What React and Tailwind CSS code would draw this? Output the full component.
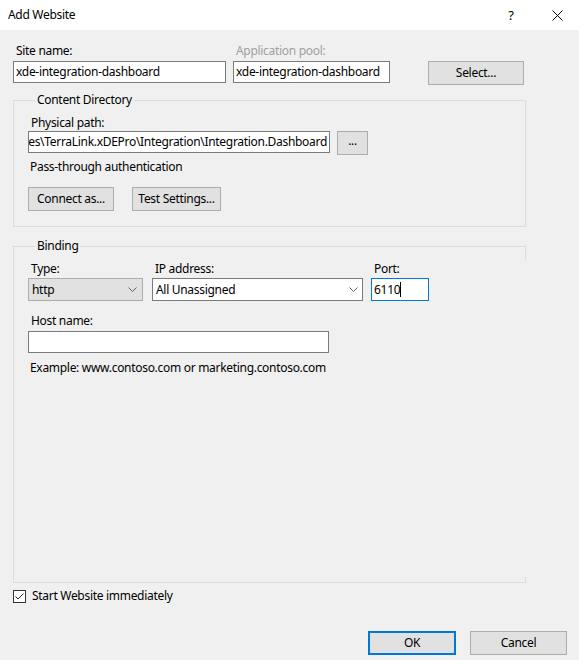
import React from "react";

const FONT = { fontFamily: '"Noto Sans", "Open Sans", Arial, sans-serif' };

function Chevron() {
  return (
    <svg width="9" height="5" viewBox="0 0 9 5" className="shrink-0">
      <polyline points="0.5,0.5 4.5,4.5 8.5,0.5" fill="none" stroke="#606060" strokeWidth="1" />
    </svg>
  );
}

function Button({ children, className = "" }) {
  return (
    <div
      className={`flex h-[24px] items-center justify-center border border-[#adadad] bg-[#e1e1e1] text-black ${className}`}
    >
      {children}
    </div>
  );
}

function TextBox({ children, className = "" }) {
  return (
    <div
      className={`flex h-[22px] items-center overflow-hidden whitespace-nowrap border border-[#7a7a7a] bg-white pl-[2px] ${className}`}
    >
      {children}
    </div>
  );
}

function Label({ children, className = "" }) {
  return <div className={`h-4 pl-[3px] leading-4 ${className}`}>{children}</div>;
}

export default function App() {
  return (
    <div
      style={FONT}
      className="flex h-[660px] w-[579px] flex-col overflow-hidden bg-[#f0f0f0] text-[12px] leading-4 tracking-[-0.3px] text-black"
    >
      {/* title bar */}
      <div className="flex h-[30px] items-center bg-white pl-[8px]">
        <span className="flex-1">Add Website</span>
        <span className="w-[10px] text-center text-[13px]">?</span>
        <span className="ml-[35px] mr-[16px] flex h-[12px] w-[12px] items-center justify-center">
          <svg width="11" height="11" viewBox="0 0 11 11">
            <path d="M0.5 0.5 L10.5 10.5 M10.5 0.5 L0.5 10.5" stroke="#000" strokeWidth="1" />
          </svg>
        </span>
      </div>

      <div className="px-[13px]">
        {/* site name / app pool */}
        <div className="mt-[13px] flex items-start">
          <div className="w-[213px]">
            <Label>Site name:</Label>
            <TextBox className="mt-[2px]">xde-integration-dashboard</TextBox>
          </div>
          <div className="ml-[7px] w-[157px]">
            <Label className="text-[#a0a0a0]">Application pool:</Label>
            <TextBox className="mt-[2px] bg-[#f0f0f0]">xde-integration-dashboard</TextBox>
          </div>
          <Button className="ml-[38px] mt-[18px] w-[96px]">Select...</Button>
        </div>

        {/* content directory */}
        <fieldset className="mt-[7px] w-[513px] border border-[#dcdcdc] px-[14px] pb-[15px]">
          <legend className="ml-[7px] px-[2px] leading-4">Content Directory</legend>
          <Label className="mt-[7px] pl-[2px]">Physical path:</Label>
          <div className="flex items-start">
            <TextBox className="w-[302px] justify-end pr-[2px]">
              C:\Program Files\TerraLink.xDEPro\Integration\Integration.Dashboard
            </TextBox>
            <Button className="ml-[7px] w-[31px] pb-[4px]">...</Button>
          </div>
          <div className="mt-[4px] pl-[2px]">Pass-through authentication</div>
          <div className="mt-[12px] flex gap-[18px]">
            <Button className="w-[86px]">Connect as...</Button>
            <Button className="w-[89px]">Test Settings...</Button>
          </div>
        </fieldset>

        {/* binding */}
        <fieldset className="relative mt-[11px] h-[345px] w-[513px] border border-[#dcdcdc] border-r-transparent px-[14px]">
          <legend className="ml-[7px] px-[2px] leading-4">Binding</legend>
          <span className="absolute -right-px top-[-9px] h-[15px] w-px bg-[#dcdcdc]" />
          <span className="absolute -right-px bottom-[-1px] h-[6px] w-px bg-[#dcdcdc]" />
          <div className="mt-[7px] flex items-start">
            <div className="w-[115px]">
              <Label className="pl-[2px]">Type:</Label>
              <div className="mt-[1px] flex h-[23px] items-center justify-between border border-[#adadad] bg-[#e1e1e1] pl-[3px] pr-[5px]">
                <span>http</span>
                <Chevron />
              </div>
            </div>
            <div className="ml-[9px] w-[211px]">
              <Label className="pl-0">IP address:</Label>
              <div className="mt-[1px] flex h-[23px] items-center justify-between border border-[#7a7a7a] bg-white pl-[3px] pr-[4px]">
                <span>All Unassigned</span>
                <Chevron />
              </div>
            </div>
            <div className="ml-[8px] w-[58px]">
              <Label className="pl-[1px]">Port:</Label>
              <div className="mt-[1px] flex h-[23px] items-center border border-[#0078d7] bg-white pl-[2px]">
                <span>6110</span>
                <span className="h-[15px] w-px bg-black" />
              </div>
            </div>
          </div>
          <Label className="mt-[12px] pl-[2px]">Host name:</Label>
          <TextBox className="mt-[2px] w-[301px]" />
          <div className="mt-[7px] pl-[2px]">Example: www.contoso.com or marketing.contoso.com</div>
        </fieldset>

        {/* start checkbox */}
        <div className="mt-[5px] flex items-center">
          <span className="flex h-[13px] w-[13px] items-center justify-center border border-[#333333] bg-white">
            <svg width="9" height="7" viewBox="0 0 9 7">
              <polyline points="0.5,3.5 3,6 8.5,0.5" fill="none" stroke="#222" strokeWidth="1" />
            </svg>
          </span>
          <span className="ml-[6px]">Start Website immediately</span>
        </div>
      </div>

      {/* footer buttons */}
      <div className="mt-[27px] flex justify-end pr-[12px]">
        <div className="flex h-[24px] w-[88px] items-center justify-center border-2 border-[#0078d7] bg-[#e1e1e1]">
          OK
        </div>
        <Button className="ml-[14px] w-[97px]">Cancel</Button>
      </div>
    </div>
  );
}
